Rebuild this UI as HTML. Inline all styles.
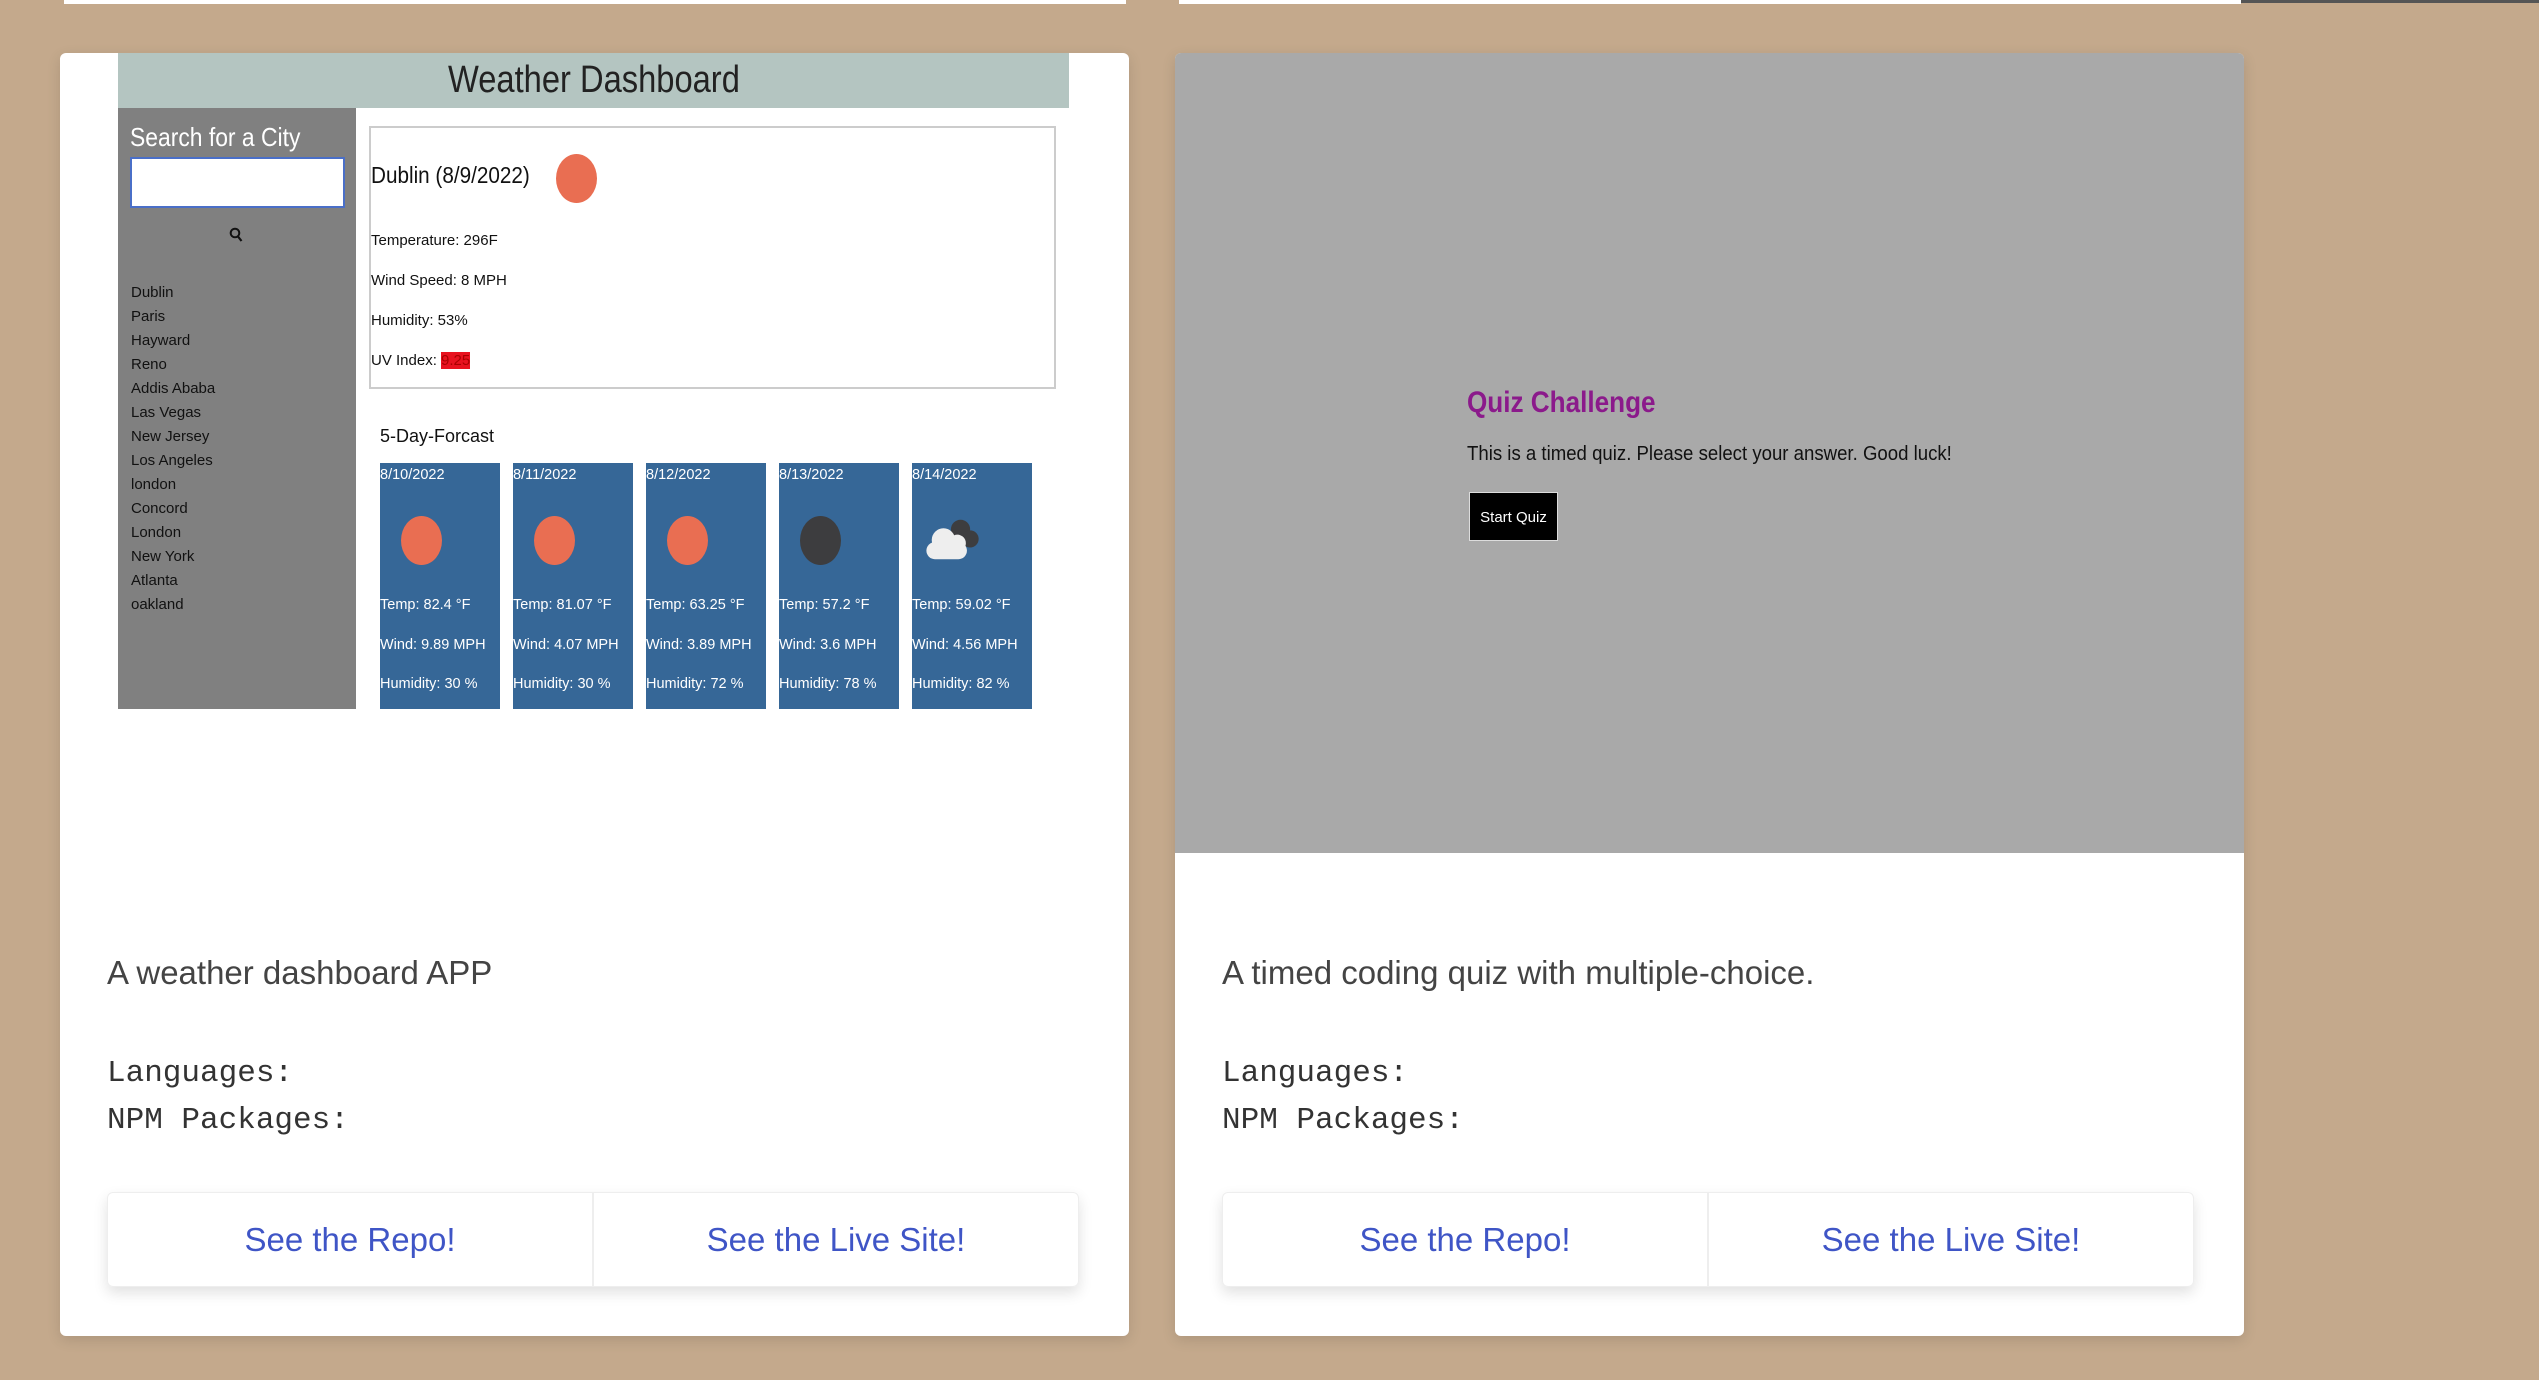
<!DOCTYPE html>
<html><head><style>
*{margin:0;padding:0;box-sizing:border-box}
body{width:2539px;height:1380px;background:#c4a98c;position:relative;overflow:hidden;font-family:"Liberation Sans",sans-serif}
.abs{position:absolute}
.card{position:absolute;top:53px;width:1069px;height:1283px;background:#fff;border-radius:6px;box-shadow:0 4px 14px rgba(0,0,0,.12);overflow:hidden}
.n{font-family:"Liberation Sans Narrow","Liberation Sans",sans-serif}
.sx{transform-origin:left center;white-space:nowrap}
.desc{position:absolute;left:47px;top:901px;font-size:33px;color:#444}
.mono{position:absolute;left:47px;font-family:"Liberation Mono",monospace;font-size:31px;color:#333}
.btns{position:absolute;left:47px;top:1139px;width:972px;height:95px;border-radius:6px;box-shadow:0 6px 14px rgba(0,0,0,.12);border:1px solid #eee;display:flex}
.btns div{flex:1;display:flex;align-items:center;justify-content:center;color:#3f55c6;font-size:33px}
.btns div+div{border-left:2px solid #eee}
.city{position:absolute;left:13px;font-size:15px;color:#111}
.fc{position:absolute;top:410px;width:120px;height:246px;background:#366797;color:#fff;font-size:14.5px}
.fc span{position:absolute;left:0;white-space:nowrap}
.dot{position:absolute;border-radius:50%;background:#e96e52}
</style></head><body>
<div class="abs" style="left:64px;top:0;width:1062px;height:4px;background:#fff"></div>
<div class="abs" style="left:1179px;top:0;width:1062px;height:4px;background:#fff"></div>
<div class="abs" style="left:2241px;top:0;width:298px;height:3px;background:#555"></div>

<div class="card" style="left:60px">
  <div class="abs n" style="left:58px;top:0;width:951px;height:55px;background:#b4c5c1;color:#222">
    <div class="abs sx" style="left:330px;top:0;font-size:38px;line-height:55px;transform:scaleX(.86)">Weather Dashboard</div>
  </div>
  <div class="abs n" style="left:58px;top:55px;width:238px;height:601px;background:#808080">
    <div class="abs sx" style="left:12px;top:14px;font-size:26px;color:#fff;transform:scaleX(.88)">Search for a City</div>
    <div class="abs" style="left:12px;top:49px;width:215px;height:51px;background:#fff;border:2px solid #4a6fc8"></div>
    <svg class="abs" style="left:111px;top:119px" width="14" height="16" viewBox="0 0 14 16"><circle cx="6" cy="6" r="4.3" fill="none" stroke="#111" stroke-width="2"/><path d="M9 9.5 L12.5 14" stroke="#111" stroke-width="2.2"/></svg>
    <div class="city" style="top:176px">Dublin</div><div class="city" style="top:200px">Paris</div><div class="city" style="top:224px">Hayward</div><div class="city" style="top:248px">Reno</div><div class="city" style="top:272px">Addis Ababa</div><div class="city" style="top:296px">Las Vegas</div><div class="city" style="top:320px">New Jersey</div><div class="city" style="top:344px">Los Angeles</div><div class="city" style="top:368px">london</div><div class="city" style="top:392px">Concord</div><div class="city" style="top:416px">London</div><div class="city" style="top:440px">New York</div><div class="city" style="top:464px">Atlanta</div><div class="city" style="top:488px">oakland</div>
  </div>
  <div class="abs n" style="left:309px;top:73px;width:687px;height:263px;border:2px solid #ccc;color:#111">
    <div class="abs sx" style="left:0;top:34px;font-size:23px;transform:scaleX(.9)">Dublin (8/9/2022)</div>
    <div class="dot" style="left:185px;top:26px;width:41px;height:49px"></div>
    <div class="abs" style="left:0;top:104px;font-size:15px">Temperature: 296F</div>
    <div class="abs" style="left:0;top:144px;font-size:15px">Wind Speed: 8 MPH</div>
    <div class="abs" style="left:0;top:184px;font-size:15px">Humidity: 53%</div>
    <div class="abs" style="left:0;top:224px;font-size:15px">UV Index: <span style="background:#e8121f;color:#a00">9.25</span></div>
  </div>
  <div class="abs n" style="left:320px;top:373px;font-size:18px;color:#111">5-Day-Forcast</div>
  <div class="fc n" style="left:320px"><span style="top:4px">8/10/2022</span><div class="dot" style="left:21px;top:53px;width:41px;height:49px"></div><span style="top:134px">Temp: 82.4 °F</span><span style="top:174px">Wind: 9.89 MPH</span><span style="top:213px">Humidity: 30 %</span></div>
  <div class="fc n" style="left:453px"><span style="top:4px">8/11/2022</span><div class="dot" style="left:21px;top:53px;width:41px;height:49px"></div><span style="top:134px">Temp: 81.07 °F</span><span style="top:174px">Wind: 4.07 MPH</span><span style="top:213px">Humidity: 30 %</span></div>
  <div class="fc n" style="left:586px"><span style="top:4px">8/12/2022</span><div class="dot" style="left:21px;top:53px;width:41px;height:49px"></div><span style="top:134px">Temp: 63.25 °F</span><span style="top:174px">Wind: 3.89 MPH</span><span style="top:213px">Humidity: 72 %</span></div>
  <div class="fc n" style="left:719px"><span style="top:4px">8/13/2022</span><div class="dot" style="left:21px;top:53px;width:41px;height:49px;background:#3d3d3f"></div><span style="top:134px">Temp: 57.2 °F</span><span style="top:174px">Wind: 3.6 MPH</span><span style="top:213px">Humidity: 78 %</span></div>
  <div class="fc n" style="left:852px"><span style="top:4px">8/14/2022</span>
    <svg class="abs" style="left:8px;top:45px" width="64" height="64" viewBox="0 0 60 60"><circle cx="38" cy="20" r="9" fill="#3d3d3f"/><circle cx="47" cy="29" r="8" fill="#3d3d3f"/><circle cx="22" cy="30" r="11" fill="#eee"/><circle cx="35" cy="33" r="8" fill="#eee"/><rect x="6" y="32" width="38" height="16" rx="8" fill="#eee"/></svg>
    <span style="top:134px">Temp: 59.02 °F</span><span style="top:174px">Wind: 4.56 MPH</span><span style="top:213px">Humidity: 82 %</span></div>

  <div class="desc">A weather dashboard APP</div>
  <div class="mono" style="top:1003px">Languages:</div>
  <div class="mono" style="top:1050px">NPM Packages:</div>
  <div class="btns"><div>See the Repo!</div><div>See the Live Site!</div></div>
</div>

<div class="card" style="left:1175px">
  <div class="abs n" style="left:0;top:0;width:1069px;height:800px;background:#a9a9a9">
    <div class="abs sx" style="left:292px;top:333px;font-size:30px;font-weight:bold;color:#8b1a8b;transform:scaleX(.87)">Quiz Challenge</div>
    <div class="abs sx" style="left:292px;top:390px;font-size:20px;color:#111;transform:scaleX(.93)">This is a timed quiz. Please select your answer. Good luck!</div>
    <div class="abs" style="left:294px;top:439px;width:89px;height:49px;background:#000;color:#fff;font-size:15px;line-height:49px;text-align:center;border:1px solid #ddd">Start Quiz</div>
  </div>
  <div class="desc">A timed coding quiz with multiple-choice.</div>
  <div class="mono" style="top:1003px">Languages:</div>
  <div class="mono" style="top:1050px">NPM Packages:</div>
  <div class="btns"><div>See the Repo!</div><div>See the Live Site!</div></div>
</div>
</body></html>
